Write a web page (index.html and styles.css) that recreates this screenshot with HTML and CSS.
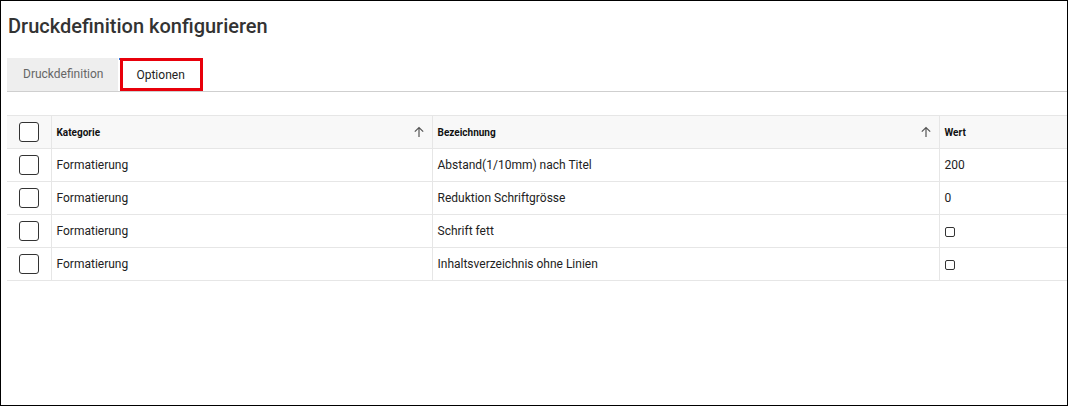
FILE: index.html
```html
<!DOCTYPE html>
<html lang="de">
<head>
  <meta charset="UTF-8">
  <title>Druckdefinition konfigurieren</title>
  <link rel="stylesheet" href="styles.css">
</head>
<body>
  <div class="frame">
    <h1>Druckdefinition konfigurieren</h1>
    <div class="tabs">
      <div class="tab">Druckdefinition</div>
      <div class="tab active">Optionen</div>
    </div>
    <table class="grid">
      <thead>
        <tr>
          <th class="sel"><span class="box"></span></th>
          <th class="col-kat">
            <div class="th-in">
              <span>Kategorie</span>
              <svg class="sort" width="12" height="12" viewBox="0 0 12 12"><path d="M6 11V1.5M1.8 5.7L6 1.5l4.2 4.2" fill="none" stroke="#555" stroke-width="1.2"/></svg>
            </div>
          </th>
          <th class="col-bez">
            <div class="th-in">
              <span>Bezeichnung</span>
              <svg class="sort" width="12" height="12" viewBox="0 0 12 12"><path d="M6 11V1.5M1.8 5.7L6 1.5l4.2 4.2" fill="none" stroke="#555" stroke-width="1.2"/></svg>
            </div>
          </th>
          <th class="col-wert">Wert</th>
        </tr>
      </thead>
      <tbody>
        <tr>
          <td class="sel"><span class="box"></span></td>
          <td>Formatierung</td>
          <td>Abstand(1/10mm) nach Titel</td>
          <td>200</td>
        </tr>
        <tr>
          <td class="sel"><span class="box"></span></td>
          <td>Formatierung</td>
          <td>Reduktion Schriftgrösse</td>
          <td>0</td>
        </tr>
        <tr>
          <td class="sel"><span class="box"></span></td>
          <td>Formatierung</td>
          <td>Schrift fett</td>
          <td><span class="mini"></span></td>
        </tr>
        <tr>
          <td class="sel"><span class="box"></span></td>
          <td>Formatierung</td>
          <td>Inhaltsverzeichnis ohne Linien</td>
          <td><span class="mini"></span></td>
        </tr>
      </tbody>
    </table>
  </div>
</body>
</html>
```

FILE: styles.css
```css
* {
  box-sizing: border-box;
}
body {
  margin: 0;
  font-family: Roboto, "Liberation Sans", sans-serif;
  color: #222;
  background: #fff;
}
.frame {
  width: 1068px;
  height: 406px;
  border: 1px solid #000;
  padding: 0 0 0 6px;
  overflow: hidden;
}
h1 {
  margin: 13px 0 0 1px;
  font-size: 20px;
  font-weight: 500;
  line-height: 24px;
  color: #333;
}
.tabs {
  display: flex;
  margin-top: 20px;
  border-bottom: 1px solid #cfcfcf;
  height: 34px;
}
.tab {
  height: 33px;
  padding: 0 15px 0 16px;
  font-size: 12px;
  line-height: 33px;
  color: #666;
  background: #eeeeee;
}
.tab.active {
  position: relative;
  margin-left: 1px;
  padding: 0 17px 0 17px;
  background: #fff;
  color: #222;
  border-top: 2px solid #2f6fd6;
  line-height: 31px;
}
.tab.active::after {
  content: "";
  position: absolute;
  left: 1px;
  top: -2px;
  right: -1px;
  bottom: 0;
  border: 3px solid #e8000b;
}
.grid {
  margin-top: 23px;
  width: 1061px;
  border-collapse: collapse;
  table-layout: fixed;
  font-size: 12px;
}
.grid th,
.grid td {
  height: 33px;
  padding: 0 5px;
  border-top: 1px solid #e6e6e6;
  border-bottom: 1px solid #e6e6e6;
  text-align: left;
  vertical-align: middle;
  white-space: nowrap;
}
.grid th {
  background: #f8f8f8;
  font-size: 10px;
  font-weight: 700;
  color: #111;
}
.grid th + th,
.grid td + td {
  border-left: 1px solid #e6e6e6;
}
.sel {
  width: 44px;
}
.col-kat {
  width: 381px;
}
.col-bez {
  width: 507px;
}
.grid .sel {
  padding: 0 0 0 12px;
}
.th-in {
  display: flex;
  justify-content: space-between;
  align-items: center;
}
.sort {
  display: block;
  margin-right: 2px;
}
.box {
  display: block;
  width: 20px;
  height: 20px;
  border: 1px solid #333;
  border-radius: 3px;
  background: #fff;
}
.mini {
  display: inline-block;
  width: 10px;
  height: 10px;
  border: 1.5px solid #333;
  border-radius: 2px;
  vertical-align: middle;
}
```
